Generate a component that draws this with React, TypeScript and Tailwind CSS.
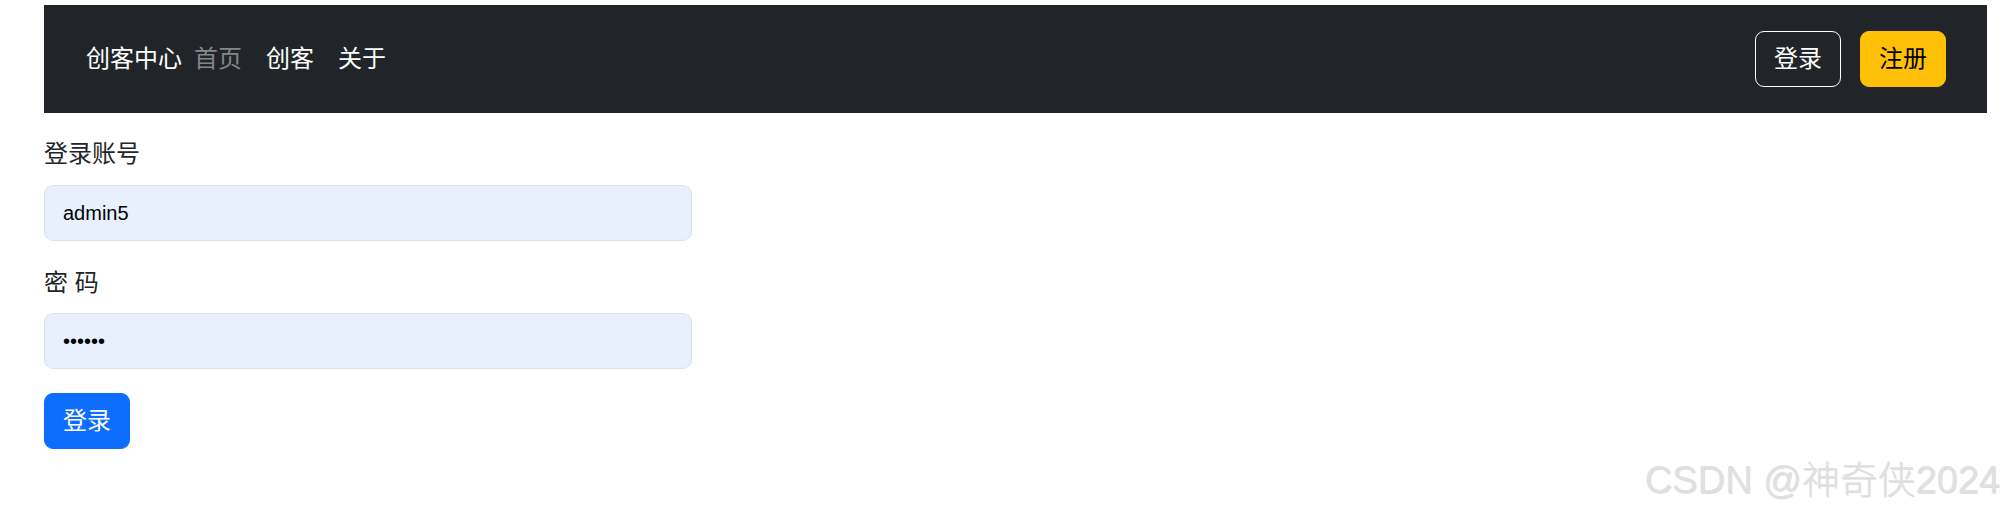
import React from "react";

const font = `"Liberation Sans", "Noto Sans CJK SC", sans-serif`;

export default function App() {
  return (
    <div
      className="relative min-h-screen bg-white pl-[44px] pr-[19px] pt-[5px] text-[#212529]"
      style={{ fontFamily: font }}
    >
      <nav className="flex h-[108px] items-center justify-between bg-[#212529] pl-[42px] pr-[41px]">
        <div className="flex items-center text-[24px] leading-[36px]">
          <a className="text-white">创客中心</a>
          <a className="px-[12px] text-[#85878a]">首页</a>
          <a className="px-[12px] text-white">创客</a>
          <a className="px-[12px] text-white">关于</a>
        </div>
        <div className="flex items-center gap-[19px]">
          <button className="rounded-[9px] border border-white px-[18px] py-[9px] text-[24px] leading-[36px] text-white">
            登录
          </button>
          <button className="rounded-[9px] border border-[#ffc107] bg-[#ffc107] px-[18px] py-[9px] text-[24px] leading-[36px] text-black">
            注册
          </button>
        </div>
      </nav>

      <form className="w-[648px]">
        <label className="mt-[23px] mb-[13px] block text-[24px] leading-[36px]">
          登录账号
        </label>
        <input
          readOnly
          defaultValue="admin5"
          className="mb-[24px] block h-[56px] w-full rounded-[9px] border border-[#dde2ea] bg-[#e8f0fe] px-[18px] text-[20px] text-black outline-none"
        />
        <label className="mb-[12px] block text-[24px] leading-[36px]">
          密 码
        </label>
        <input
          readOnly
          type="password"
          defaultValue="123456"
          className="mb-[24px] block h-[56px] w-full rounded-[9px] border border-[#dde2ea] bg-[#e8f0fe] px-[18px] text-[20px] text-black outline-none"
        />
        <button
          type="button"
          className="rounded-[9px] border border-[#0d6efd] bg-[#0d6efd] px-[18px] py-[9px] text-[24px] leading-[36px] text-white"
        >
          登录
        </button>
      </form>

      <div className="pointer-events-none absolute right-[6px] top-[461px] text-[38px] font-light leading-[38px] text-[#e0e0e0] [text-shadow:1px_1px_0_rgba(0,0,0,0.12)]">
        CSDN @神奇侠2024
      </div>
    </div>
  );
}
